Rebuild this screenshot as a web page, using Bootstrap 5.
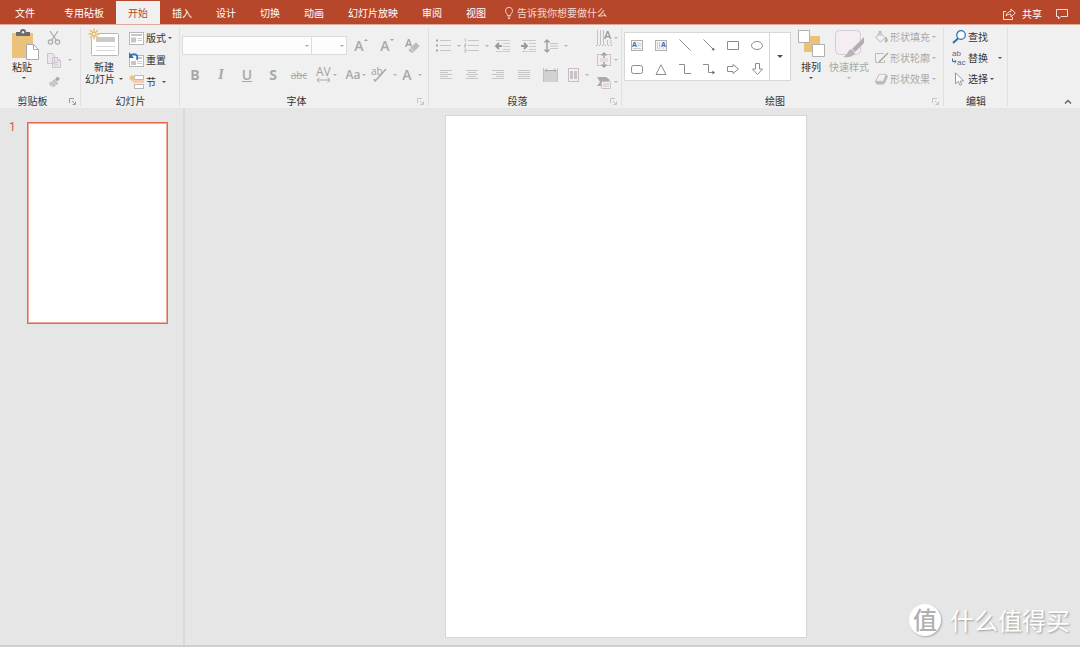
<!DOCTYPE html>
<html lang="zh-CN">
<head>
<meta charset="utf-8">
<meta name="viewport" content="width=device-width, initial-scale=1">
<title>演示文稿</title>
<link href="https://cdn.jsdelivr.net/npm/bootstrap@5.3.0/dist/css/bootstrap.min.css" rel="stylesheet">
<style>
:root{--brand:#b7472a;--ribbon:#f0f0f0;--work:#e6e6e6;--off:#a8a8a8;--ink:#333}
body{font-family:"Open Sans","Noto Sans CJK SC",sans-serif;font-size:10px;line-height:14px;color:var(--ink);background:var(--work)}
button{background:none;border:0;padding:0;color:inherit;white-space:nowrap}
button:disabled{color:var(--off)}
svg{display:block;flex:none;overflow:visible}
.titlebar{background:var(--brand);height:24px;color:#fff}
.titlebar .nav-tabs{border:0}
.titlebar .nav-link{border:0;border-radius:0;color:#fff;padding:5px 12px 4px;margin:1px 0 0;line-height:14px}
.titlebar .nav-link.active{background:var(--ribbon);color:var(--brand)}
.titlebar .file-tab{width:50px;margin-right:2px}
.tell{color:#f3d9d2;margin-left:7px;padding-top:2px}
.share{gap:6px;margin-right:14px}
.ribbon{background:var(--ribbon);border-top:1px solid #dfa898;overflow:hidden}
.group{position:relative;flex:none}
.group::after{content:"";position:absolute;right:0;top:2px;bottom:2px;width:1px;background:#e0e0e0}
.group-body{height:70px}
.group-label{height:13px;line-height:13px}
.launcher{position:absolute;right:5px;bottom:3px}
.tri{display:inline-block;flex:none;border:2px solid transparent;border-top-color:currentColor;border-bottom:0;width:4px;height:2px;opacity:.85}
.inset{padding-left:2px}
.near{margin-left:6px}
.big{display:flex;flex-direction:column;align-items:center;line-height:12px}
.stack-tools{display:grid;grid-auto-rows:22px;padding-top:2px}
.stack-tight{display:grid;grid-auto-rows:21px;padding-top:1px}
.stack-tools button,.stack-tight button,.tool{display:flex;align-items:center;gap:2px}
.tool{justify-content:center;width:26px;height:29px;flex:none}
.tool-wide{width:28px}
.tool-para{width:30px}
.glyph{font-size:14px;line-height:16px;font-weight:600}
.rows{padding-top:6px}
.box{height:19px;border:1px solid #dcdcdc;border-radius:0;background:#fdfdfd url("data:image/svg+xml,%3Csvg xmlns='http://www.w3.org/2000/svg' width='4' height='2'%3E%3Cpath d='M0 0h4L2 2z' fill='%23a8a8a8'/%3E%3C/svg%3E") no-repeat right 2px center;appearance:none;opacity:1;padding:0}
.box-name{width:130px}
.box-size{width:36px;margin-left:-1px}
.gallery{display:flex;height:49px;margin-top:7px;border:1px solid #d8d8d8;background:#fff}
.shapes{display:grid;grid-template-columns:repeat(6,24px);grid-auto-rows:24px}
.shapes button{display:flex;align-items:center;justify-content:center}
.gallery-more{width:21px;border-left:1px solid #d8d8d8;display:flex;align-items:center;justify-content:center}
.gallery-more .tri{border-width:3px 3px 0;width:6px;height:3px}
.workspace{min-height:0}
.thumbs{width:185px;border-right:2px solid #dadada;padding:14px 15px 0 9px;flex:none}
.thumb-num{width:18px;font:12px/10px Roboto,sans-serif;color:#d9583a}
.thumb{flex:1;aspect-ratio:141/202;background:#fff;border:1px solid #e4694a;box-shadow:inset 0 0 0 1px #f2ab98}
.stage{padding:7px 14px 7px 0;min-width:0}
.page{aspect-ratio:362/523;height:100%;background:#fff;border:1px solid #d6d6d6}
.footer-line{height:2px;background:#cfcfcf}
.watermark{position:absolute;right:10px;bottom:10px;gap:9px;font-size:24px;line-height:34px;color:#fff;text-shadow:1px 1px 2px #999;font-family:"Noto Sans CJK SC",sans-serif}
.seal{width:32px;height:32px;border-radius:50%;background:#fff;color:#b0b0b0;box-shadow:1px 1px 2px #aaa;text-shadow:none;font-weight:500;line-height:30px}
</style>
<script src="https://cdn.jsdelivr.net/npm/bootstrap@5.3.0/dist/js/bootstrap.bundle.min.js"></script>
</head>
<body class="vh-100 d-flex flex-column overflow-hidden">
<header class="titlebar d-flex align-items-stretch flex-shrink-0">
  <nav class="nav nav-tabs flex-nowrap text-nowrap">
    <a class="nav-link file-tab text-center" href="#">文件</a>
    <a class="nav-link" href="#">专用砧板</a>
    <a class="nav-link active" aria-current="page" href="#">开始</a>
    <a class="nav-link" href="#">插入</a>
    <a class="nav-link" href="#">设计</a>
    <a class="nav-link" href="#">切换</a>
    <a class="nav-link" href="#">动画</a>
    <a class="nav-link" href="#">幻灯片放映</a>
    <a class="nav-link" href="#">审阅</a>
    <a class="nav-link" href="#">视图</a>
  </nav>
  <button class="tell d-flex align-items-center gap-1">
    <svg width="8" height="12" viewBox="0 0 8 12" fill="none" stroke="currentColor" stroke-width=".9"><path d="M2.500 8.500C2.500 6.500.5 6 .5 3.800a3.400 3.400 0 0 1 7 0C7.500 6 5.500 6.500 5.500 8.500zM2.500 10h3M3 11.500h2"/></svg>
    <span>告诉我你想要做什么</span>
  </button>
  <div class="ms-auto d-flex align-items-center pe-2 pt-1">
    <button class="share d-flex align-items-center">
      <svg width="13" height="12" viewBox="0 0 13 12" fill="none" stroke="#f6ded8" stroke-width="1"><path d="M3 3.500H.5v8h9V9M3 8c.5-3 2.500-4.300 5-4.500V1l4.300 4L8 9V6.200C6 6.200 4.300 6.500 3 8z"/></svg>
      <span>共享</span>
    </button>
    <button aria-label="批注" class="me-1"><svg width="12" height="11" viewBox="0 0 12 11" fill="none" stroke="#f6ded8"><path d="M.5.5h11v7H5L2.500 10V7.500h-2z"/></svg></button>
  </div>
</header>

<section class="ribbon d-flex flex-shrink-0">
  <div class="group" style="width:81px">
    <div class="group-body d-flex">
      <button class="big ms-2 pt-1">
        <svg class="ms-1" width="28" height="32" viewBox="0 0 28 32"><rect x="0" y="4" width="21" height="25" fill="#eac27a"/><path d="M4 3h4a3 3 0 0 1 6 0h4v4H4z" fill="#6b6b6b"/><circle cx="11" cy="3.300" r="1.200" fill="#f0f0f0"/><path d="M14.500 15.500h7l5 5v10h-12z" fill="#fff" stroke="#aaa"/><path d="M21.500 15.500v5h5" fill="none" stroke="#aaa"/></svg>
        <span class="pe-1">粘贴</span><span class="tri mt-1"></span>
      </button>
      <div class="stack-tools ms-2">
        <button disabled aria-label="剪切"><svg width="12" height="14" viewBox="1 0 12 14" fill="none" stroke="#a8a8a8" stroke-width="1.200"><path d="M3 0l6.500 9.500M11 0L4.500 9.500"/><circle cx="3.500" cy="11" r="2.200"/><circle cx="10.500" cy="11" r="2.200"/></svg></button>
        <button disabled aria-label="复制"><svg width="14" height="15" viewBox="1 0 14 15" fill="#ece6ec" stroke="#cbc3cb"><path d="M.5.5h5l2 2v8h-7zM5.500 4.500h5l3 3v7h-8z"/><path d="M7 9.500h4M7 12h4M10.500 4.500v3h3"/></svg><span class="tri ms-1"></span></button>
        <button disabled aria-label="格式刷"><svg width="13" height="12" viewBox="0 0 14 12"><path d="M10 0l3 2.500-3 3L7.500 3z" fill="#a9a9a9"/><path d="M6.500 3L11 7.500 9.500 9 5 4.500z" fill="#bababa"/><path d="M1 7l4-2 4 4-3 3-2-2-1 .5-1-1z" fill="#c9c4c9"/></svg></button>
      </div>
    </div>
    <div class="group-label text-center pe-3">剪贴板</div>
    <button class="launcher" aria-label="剪贴板选项"><svg width="7" height="7" viewBox="0 0 7 7" fill="none" stroke="#999"><path d="M.5 5V.5H5M3 3l3 3M6.500 3.500v3h-3"/></svg></button>
  </div>

  <div class="group" style="width:99px">
    <div class="group-body d-flex">
      <button class="big ms-1 pt-1">
        <svg width="30" height="32" viewBox="0 0 30 32"><rect x="2.500" y="4.500" width="27" height="22" rx="1" fill="#fff" stroke="#b8b8b8"/><path d="M7 8h19v5H7z" fill="#cacaca"/><path d="M7 17.500h19M7 21.500h19" stroke="#d7d7d7"/><circle cx="5" cy="5" r="5" fill="#f0f0f0"/><g stroke="#e9b766" stroke-width="1.300" fill="none"><circle cx="5" cy="5" r="2"/><path d="M5-.5v2.500M5 8v2.500M-.5 5H2M8 5h2.500M1 1l2 2M7 7l2 2M1 9l2-2M7 3l2-2"/></g></svg>
        <span>新建</span><span class="d-flex align-items-center gap-1">幻灯片 <span class="tri"></span></span>
      </button>
      <div class="stack-tools near">
        <button><svg width="15" height="13" viewBox="0 0 15 13"><rect x=".5" y=".5" width="14" height="12" fill="#fff" stroke="#b8b8b8"/><path d="M2 2h11v2H2zM2 5.500h5v5H2z" fill="#c6c6c6"/><path d="M8.500 6.500H13M8.500 8.500H13" stroke="#ccc"/></svg><span>版式</span><span class="tri"></span></button>
        <button><svg width="15" height="14" viewBox="0 0 15 14"><rect x=".5" y="2.500" width="14" height="11" fill="#fff" stroke="#b8b8b8"/><path d="M7 4h6v2H7zM2 8h5v4H2z" fill="#c6c6c6"/><path d="M8 8.500h5M8 10.500h5" stroke="#ccc"/><path d="M2 2c4-2.500 7.500 0 6 5" fill="none" stroke="#2f73b5" stroke-width="1.600"/><path d="M0-1v6h5z" fill="#2f73b5"/></svg><span>重置</span></button>
        <button><svg width="15" height="14" viewBox="0 0 15 14"><path d="M5.500.5h9v4h-9zM5.500 9.500h9v4h-9z" fill="#fff" stroke="#b8b8b8"/><path d="M4 5h11v3H4z" fill="#f3cdb2"/><path d="M3 0v6M0 3h6M1 1l4 4M1 5l4-4" stroke="#e9b766"/></svg><span>节</span><span class="tri ms-1"></span></button>
      </div>
    </div>
    <div class="group-label text-center">幻灯片</div>
  </div>

  <div class="group" style="width:249px">
    <div class="group-body rows inset">
      <div class="d-flex align-items-center">
        <select class="box box-name" disabled aria-label="字体名称"><option></option></select>
        <select class="box box-size" disabled aria-label="字号"><option></option></select>
        <button class="tool glyph ps-1" disabled aria-label="增大字号">A<svg width="4" height="12" viewBox="0 0 4 12"><path d="M-2 1l2-2 2 2z" fill="#a0a0a0"/></svg></button>
        <button class="tool glyph ps-1" disabled aria-label="减小字号">A<svg width="4" height="12" viewBox="0 0 4 12"><path d="M-2-1l2 2 2-2z" fill="#a0a0a0"/></svg></button>
        <button class="tool" disabled aria-label="清除格式"><svg width="15" height="16" viewBox="0 0 15 16"><text x="0" y="9" font-size="11" font-weight="600" fill="#a0a0a0">A</text><path d="M11 4l4 4-7 7H6l-3-3z" fill="#bdbdbd" stroke="#f0f0f0" stroke-width=".6"/><path d="M5 9.500l4 4" stroke="#e8e8e8"/></svg></button>
      </div>
      <div class="d-flex">
        <button class="tool glyph fw-bold" disabled>B</button>
        <button class="tool glyph" disabled><i style="font-family:'Liberation Serif',serif;font-weight:bold">I</i></button>
        <button class="tool glyph" disabled><u>U</u></button>
        <button class="tool glyph fw-bold" disabled>S</button>
        <button class="tool" disabled><s>abc</s></button>
        <button class="tool tool-wide" disabled aria-label="字符间距"><svg width="15" height="15" viewBox="0 0 15 15"><text x="0" y="9" font-size="12" fill="#a0a0a0">AV</text><path d="M1 13h13M3.500 10.500L1 13l2.500 2.500M11.500 10.500L14 13l-2.500 2.500" fill="none" stroke="#a8a8a8"/></svg><span class="tri"></span></button>
        <button class="tool tool-wide ps-1" disabled><span class="fw-semibold" style="font-size:12px">Aa</span><span class="tri"></span></button>
        <button class="tool tool-wide ps-1" disabled aria-label="突出显示"><svg width="16" height="15" viewBox="0 0 16 15"><text x="0" y="8" font-size="10" fill="#a0a0a0">ab</text><path d="M15 2L7 11l-3 3-1-2" fill="none" stroke="#aaa" stroke-width="1.600"/></svg><span class="tri ms-1"></span></button>
        <button class="tool tool-wide glyph ps-1" disabled>A<span class="tri ms-1"></span></button>
      </div>
    </div>
    <div class="group-label text-center pe-3">字体</div>
    <button class="launcher" disabled aria-label="字体选项"><svg width="7" height="7" viewBox="0 0 7 7" fill="none" stroke="#c4c4c4"><path d="M.5 5V.5H5M3 3l3 3M6.500 3.500v3h-3"/></svg></button>
  </div>

  <div class="group" style="width:193px">
    <div class="group-body d-flex justify-content-between ps-1 pe-1">
      <div class="rows">
        <div class="d-flex">
          <button class="tool tool-para" disabled aria-label="项目符号"><svg class="me-1" width="15" height="13" viewBox="0 0 15 13"><path d="M0 .5h2v2H0zM0 5.500h2v2H0zM0 10.500h2v2H0z" fill="#a8a8a8"/><path d="M4 1.500h11M4 6.500h11M4 11.500h11" stroke="#c6c6c6"/></svg><span class="tri"></span></button>
          <button class="tool" disabled aria-label="编号"><svg class="me-1" width="15" height="13" viewBox="0 0 15 13"><path d="M.5 0h1v3M.5 5h1.500v1.500H.5V8h1.500M.5 10h1.500v3H.5M.5 11.500h1.500" fill="none" stroke="#b4b4b4" stroke-width=".8"/><path d="M4 1.500h11M4 6.500h11M4 11.500h11" stroke="#c6c6c6"/></svg><span class="tri"></span></button>
          <button class="tool" disabled aria-label="减少缩进"><svg width="15" height="12" viewBox="0 0 15 12"><path d="M1 .5h14M8 3.500h7M8 6.500h7M8 9.500h7M1 11.500h14" stroke="#cbcbcb"/><path d="M7 6H1M4 3L1 6l3 3" fill="none" stroke="#999" stroke-width="1.800"/></svg></button>
          <button class="tool" disabled aria-label="增加缩进"><svg width="15" height="12" viewBox="0 0 15 12"><path d="M1 .5h14M8 3.500h7M8 6.500h7M8 9.500h7M1 11.500h14" stroke="#cbcbcb"/><path d="M0 6h6M3 3l3 3-3 3" fill="none" stroke="#999" stroke-width="1.800"/></svg></button>
          <button class="tool tool-para" disabled aria-label="行距"><svg class="me-1" width="14" height="14" viewBox="0 0 14 14"><path d="M3 1v12M.5 3.500L3 1l2.500 2.500M.5 10.500L3 13l2.500-2.500" fill="none" stroke="#a0a0a0" stroke-width="1.500"/><path d="M6 4.500h8M6 7h8M6 9.500h8" stroke="#c6c6c6"/></svg><span class="tri"></span></button>
        </div>
        <div class="d-flex">
          <button class="tool" disabled aria-label="左对齐"><svg width="12" height="9" viewBox="0 0 12 9" stroke="#c6c6c6"><path d="M0 .5h12M0 2.500h8M0 4.500h12M0 6.500h8M0 8.500h12"/></svg></button>
          <button class="tool" disabled aria-label="居中"><svg width="12" height="9" viewBox="0 0 12 9" stroke="#c6c6c6"><path d="M0 .5h12M2 2.500h8M0 4.500h12M2 6.500h8M0 8.500h12"/></svg></button>
          <button class="tool" disabled aria-label="右对齐"><svg width="12" height="9" viewBox="0 0 12 9" stroke="#c6c6c6"><path d="M0 .5h12M4 2.500h8M0 4.500h12M4 6.500h8M0 8.500h12"/></svg></button>
          <button class="tool" disabled aria-label="两端对齐"><svg width="12" height="9" viewBox="0 0 12 9" stroke="#c6c6c6"><path d="M0 .5h12M0 2.500h12M0 4.500h12M0 6.500h12M0 8.500h12"/></svg></button>
          <button class="tool" disabled aria-label="分散对齐"><svg width="15" height="14" viewBox="0 0 15 14"><path d="M1 3h13v11H1z" fill="#d2d2d2"/><path d="M.5 0v14M14.500 0v14" stroke="#c0c0c0"/><path d="M2 2.500h11M4 .5l-2 2 2 2M11 .5l2 2-2 2" fill="none" stroke="#a8a8a8"/></svg></button>
          <button class="tool tool-para" disabled aria-label="分栏"><svg class="me-1" width="11" height="14" viewBox="0 0 11 14"><rect x=".5" y=".5" width="10" height="13" fill="#f5edf3" stroke="#c8bfc6"/><path d="M2 3h3v8H2zM6 3h3v8H6z" fill="#c9c2c8"/></svg><span class="tri"></span></button>
        </div>
      </div>
      <div class="stack-tools">
        <button disabled aria-label="文字方向"><svg width="16" height="16" viewBox="0 0 16 16"><path d="M1.500 0v15M4.500 0v15M7.500 0v15M11.500 10v5M15 10v5" stroke="#c2c2c2"/><path d="M0 15.500h16" stroke="#aaa" stroke-dasharray="1 2"/><text x="8" y="9" font-size="11" font-weight="600" fill="#999">A</text></svg><span class="tri"></span></button>
        <button disabled aria-label="对齐文本"><svg width="16" height="14" viewBox="0 0 16 14"><rect x="1.500" y="1.500" width="13" height="11" fill="#f5edf3" stroke="#cbc1c9"/><path d="M4 6h8M4 8h8" stroke="#ccc"/><path d="M8 0v5M5.500 2.500L8 0l2.500 2.500M8 9v5M5.500 11.500L8 14l2.500-2.500" fill="none" stroke="#a0a0a0" stroke-width="1.400"/></svg><span class="tri"></span></button>
        <button disabled aria-label="转换为 SmartArt"><svg width="16" height="13" viewBox="0 0 16 13"><path d="M1 1h9l4 3-4 3v3H1l3-4z" fill="#ababab"/><rect x="5.500" y="5.500" width="9" height="7" rx="1" fill="#f5edf3" stroke="#c8bfc6"/><path d="M7 8h6M7 10h6" stroke="#d0c8ce"/></svg><span class="tri"></span></button>
      </div>
    </div>
    <div class="group-label text-center pe-3">段落</div>
    <button class="launcher" disabled aria-label="段落选项"><svg width="7" height="7" viewBox="0 0 7 7" fill="none" stroke="#c4c4c4"><path d="M.5 5V.5H5M3 3l3 3M6.500 3.500v3h-3"/></svg></button>
  </div>

  <div class="group" style="width:322px">
    <div class="group-body d-flex align-items-start inset">
      <div class="gallery">
        <div class="shapes">
          <button aria-label="横排文本框"><svg width="12" height="11" viewBox="0 0 12 11"><rect x=".5" y=".5" width="11" height="10" fill="#f4f4f4" stroke="#b0b0b0"/><path d="M6.500 3.500H10M6.500 5.500H10M2 8.500h8" stroke="#ccc"/><text x="1" y="7" font-size="7" font-weight="bold" fill="#2f73b5">A</text></svg></button>
          <button aria-label="竖排文本框"><svg width="12" height="11" viewBox="0 0 12 11"><rect x=".5" y=".5" width="11" height="10" fill="#f4f4f4" stroke="#b0b0b0"/><path d="M2.500 2v7M4.500 2v7M8.500 7v2" stroke="#ccc"/><text x="6" y="7" font-size="7" font-weight="bold" fill="#2f73b5">A</text></svg></button>
          <button aria-label="直线"><svg width="12" height="12" viewBox="0 0 12 12" stroke="#8c8c8c"><path d="M.5.5l11 11"/></svg></button>
          <button aria-label="箭头"><svg width="12" height="12" viewBox="0 0 12 12" stroke="#8c8c8c"><path d="M.5.5l10 10"/><path d="M11.500 11.500l-.5-3-2.500 2.500z" fill="#666" stroke="none"/></svg></button>
          <button aria-label="矩形"><svg width="12" height="9" viewBox="0 0 12 9" fill="none" stroke="#8c8c8c"><path d="M.5.5h11v8H.5z"/></svg></button>
          <button aria-label="椭圆"><svg width="12" height="9" viewBox="0 0 12 9" fill="none" stroke="#8c8c8c"><ellipse cx="6" cy="4.500" rx="5.500" ry="4"/></svg></button>
          <button aria-label="圆角矩形"><svg width="12" height="9" viewBox="0 0 12 9" fill="none" stroke="#8c8c8c"><rect x=".5" y=".5" width="11" height="8" rx="2"/></svg></button>
          <button aria-label="三角形"><svg width="12" height="11" viewBox="0 0 12 11" fill="none" stroke="#8c8c8c"><path d="M6 .8l5 9.700H1z"/></svg></button>
          <button aria-label="肘形连接符"><svg width="12" height="10" viewBox="0 0 12 10" fill="none" stroke="#8c8c8c"><path d="M0 .5h5.500v9H12"/></svg></button>
          <button aria-label="肘形箭头连接符"><svg width="12" height="10" viewBox="0 0 12 10" fill="none" stroke="#8c8c8c"><path d="M0 .5h5.500v8H10"/><path d="M9.500 6.500l2.500 2-2.500 2z" fill="#666" stroke="none"/></svg></button>
          <button aria-label="右箭头"><svg width="12" height="10" viewBox="0 0 12 10" fill="none" stroke="#8c8c8c"><path d="M.5 2.500H6V.5L11.500 5 6 9.500v-2H.5z"/></svg></button>
          <button aria-label="下箭头"><svg width="11" height="12" viewBox="0 0 11 12" fill="none" stroke="#8c8c8c"><path d="M3.500.5h4V6h3l-5 5.500L.5 6h3z"/></svg></button>
        </div>
        <button class="gallery-more" aria-label="更多形状"><span class="tri"></span></button>
      </div>
      <button class="big near pt-1">
        <svg class="mb-1" width="28" height="28" viewBox="0 0 28 28"><path d="M7 7h16v16H7z" fill="#eac27a"/><path d="M1.500 1.500h11v12h-11zM15.500 15.500h12v12h-12z" fill="#fff" stroke="#b0b0b0"/></svg>
        <span>排列</span><span class="tri mt-1"></span>
      </button>
      <button class="big ms-1 pt-1" disabled>
        <svg class="mb-1" width="30" height="28" viewBox="0 0 30 28"><rect x="1.500" y="1.500" width="25" height="24" rx="4" fill="#f4edf4" stroke="#d2cbd2"/><path d="M30 8v6l-9 9-3-3z" fill="#b1adb1"/><path d="M17 20l4 4c-2 4-7 5-12 4 4-1 4-6 8-8z" fill="#b7b3b7"/></svg>
        <span>快速样式</span><span class="tri mt-1"></span>
      </button>
      <div class="stack-tight near">
        <button disabled><svg width="13" height="12" viewBox="0 0 13 12" fill="#f4f0f4" stroke="#b5b5b5"><path d="M5 1.500l5 5L5.500 11 .8 6.500zM4 5V.5h2V5"/><path d="M11 6c2 3 1.500 5 0 5s-1-2 0-5z" fill="#b5b5b5"/></svg><span>形状填充</span><span class="tri"></span></button>
        <button disabled><svg width="13" height="12" viewBox="0 0 13 12" fill="none" stroke="#bcbcbc"><path d="M9 1.500H.5v9h9V8"/><path d="M13 1L6 8l-2 2" stroke="#a8a8a8" stroke-width="1.600"/></svg><span>形状轮廓</span><span class="tri"></span></button>
        <button disabled><svg width="13" height="12" viewBox="0 0 14 12"><path d="M4 1h8l2 2-3 7-2 2H2L0 9z" fill="#b9b9b9"/><path d="M4.500 1H12L9 8.500H.8z" fill="#f4eff4" stroke="#bbb" stroke-width=".7"/></svg><span>形状效果</span><span class="tri"></span></button>
      </div>
    </div>
    <div class="group-label text-center pe-3">绘图</div>
    <button class="launcher" disabled aria-label="绘图选项"><svg width="7" height="7" viewBox="0 0 7 7" fill="none" stroke="#c4c4c4"><path d="M.5 5V.5H5M3 3l3 3M6.500 3.500v3h-3"/></svg></button>
  </div>

  <div class="group" style="width:64px">
    <div class="group-body stack-tight align-content-start ps-2">
      <button><svg width="14" height="14" viewBox="0 0 14 14" fill="none" stroke="#2f6fb0"><circle cx="9" cy="5" r="4.300" fill="#f8fbff" stroke-width="1.200"/><path d="M6 8.500L1 13" stroke-width="2"/></svg><span>查找</span></button>
      <button><svg width="14" height="16" viewBox="0 0 14 16" font-family="Liberation Sans, sans-serif" font-size="8"><text x="0" y="6" fill="#666">a<tspan fill="#8e4bb0">b</tspan></text><text x="5" y="15" fill="#666">a<tspan fill="#2f73b5">c</tspan></text><path d="M.5 8.500v3h3.500M2.500 10L4.200 11.500 2.500 13" fill="none" stroke="#2f73b5"/></svg><span>替换</span><span class="tri ms-2"></span></button>
      <button><svg width="14" height="14" viewBox="0 0 14 14" fill="#fff" stroke="#999"><path d="M3.500.8v11l2.800-2.500L8 13.300l1.800-.8L8.200 9h3.500z"/></svg><span>选择</span><span class="tri"></span></button>
    </div>
    <div class="group-label text-center">编辑</div>
  </div>
  <button class="ms-auto me-2 mb-1 align-self-end" aria-label="折叠功能区"><svg width="8" height="5" viewBox="0 0 8 5" fill="none" stroke="#666" stroke-width="1.500"><path d="M1 4.500l3-3 3 3"/></svg></button>
</section>

<main class="workspace d-flex flex-grow-1">
  <aside class="thumbs d-flex align-items-start">
    <span class="thumb-num">1</span>
    <a class="thumb" href="#" aria-label="幻灯片 1"></a>
  </aside>
  <section class="stage flex-grow-1 d-flex justify-content-center"><div class="page"></div></section>
</main>
<div class="footer-line flex-shrink-0"></div>
<div class="watermark d-flex align-items-center"><span class="seal text-center">值</span><span>什么值得买</span></div>
</body>
</html>
